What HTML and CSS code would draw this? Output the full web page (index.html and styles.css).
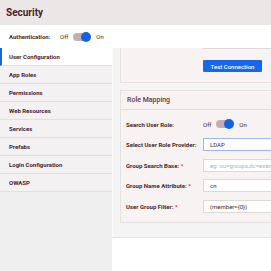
FILE: index.html
```html
<!DOCTYPE html>
<html lang="en">
<head>
  <meta charset="UTF-8">
  <title>Security</title>
  <link rel="stylesheet" href="styles.css">
</head>
<body>
  <div class="topbar">Security</div>

  <div class="authbar">
    <span class="auth-label">Authentication:</span>
    <div class="switch">
      <span>Off</span>
      <span class="track"><span class="knob"></span></span>
      <span>On</span>
    </div>
  </div>

  <div class="layout">
    <ul class="sidebar">
      <li class="active">User Configuration</li>
      <li>App Roles</li>
      <li>Permissions</li>
      <li>Web Resources</li>
      <li>Services</li>
      <li>Prefabs</li>
      <li>Login Configuration</li>
      <li>OWASP</li>
    </ul>

    <div class="main">
      <div class="content">
        <!-- LDAP settings, scrolled up -->
        <div class="card card-ldap">
          <div class="row">
            <span class="label"></span>
            <input class="field" type="password" value="">
          </div>
          <div class="actions">
            <button class="btn">Test Connection</button>
          </div>
        </div>

        <div class="card">
          <div class="card-head">Role Mapping</div>
          <div class="card-body">
            <div class="row">
              <span class="label">Search User Role:</span>
              <div class="switch">
                <span>Off</span>
                <span class="track"><span class="knob"></span></span>
                <span>On</span>
              </div>
            </div>
            <div class="row">
              <span class="label">Select User Role Provider:</span>
              <input class="field focused" type="text" value="LDAP">
            </div>
            <div class="row">
              <span class="label">Group Search Base: <em>*</em></span>
              <input class="field" type="text" placeholder="eg: ou=groups,dc=example,dc=com">
            </div>
            <div class="row">
              <span class="label">Group Name Attribute: <em>*</em></span>
              <input class="field" type="text" value="cn">
            </div>
            <div class="row">
              <span class="label">User Group Filter: <em>*</em></span>
              <input class="field" type="text" value="(member={0})">
            </div>
          </div>
        </div>
      </div>
    </div>
  </div>
</body>
</html>
```

FILE: styles.css
```css
body {
  margin: 0;
  font-family: Roboto, "Liberation Sans", sans-serif;
  color: #4b1f2b;
  background: #fff;
  height: 271px;
  overflow: hidden;
}
.topbar {
  height: 25px;
  line-height: 25px;
  padding-left: 6px;
  background: #ebe7e7;
  font-size: 10px;
  font-weight: 700;
  color: #4a1c28;
}
.authbar {
  height: 23px;
  display: flex;
  align-items: center;
  padding-left: 9px;
  background: #fff;
}
.auth-label {
  font-size: 6px;
  font-weight: 700;
  width: 51px;
}
.switch {
  display: inline-flex;
  align-items: center;
  gap: 5px;
  font-size: 6px;
  color: #4b1f2b;
}
.track {
  position: relative;
  width: 17px;
  height: 8px;
  border-radius: 4px;
  background: #c3aeb0;
  margin-right: 1px;
}
.knob {
  position: absolute;
  right: -1px;
  top: -1px;
  width: 10px;
  height: 10px;
  border-radius: 50%;
  background: #1460e6;
}
.layout {
  display: flex;
  height: 223px;
}
.sidebar {
  list-style: none;
  margin: 0;
  padding: 0;
  width: 112px;
  flex-shrink: 0;
  background: #efefef;
}
.sidebar li {
  height: 17px;
  line-height: 17px;
  padding-left: 9px;
  border-bottom: 1px solid #e2dede;
  background: #f3f1f1;
  font-size: 6px;
  font-weight: 700;
  color: #4d2230;
}
.sidebar li.active {
  background: #fff;
  border-left: 2px solid #1a66e0;
  padding-left: 7px;
}
.main {
  flex: 1;
  min-width: 0;
  background: #fff;
}
.content {
  height: 189px;
  padding-left: 7px;
  border-left: 1px solid #fbfbfb;
  border-bottom: 1px solid #e3e3e3;
  background: #f4f4f4;
  overflow: hidden;
}
.card {
  margin-right: -40px;
  background: #f7f3f3;
  border: 1px solid #e6e0e0;
  padding: 0 5px;
}
.card-ldap {
  margin-top: -16px;
  padding-top: 2px;
  padding-bottom: 10px;
}
.card + .card {
  margin-top: 7px;
}
.card-head {
  height: 18px;
  line-height: 18px;
  border-bottom: 1px solid #e4dcdc;
  margin: 0 -5px;
  padding-left: 6px;
  font-size: 7px;
  font-weight: 500;
  color: #6a3441;
}
.card-body {
  padding: 4px 0 5.5px;
}
.card-body .row {
  height: 20.5px;
}
.row {
  display: flex;
  align-items: center;
}
.label {
  width: 77px;
  flex-shrink: 0;
  font-size: 6px;
  font-weight: 700;
  color: #4b1f2b;
}
.label em {
  font-style: normal;
  color: #e0262b;
}
.field {
  flex: 1;
  height: 13px;
  box-sizing: border-box;
  border: 1px solid #ddd7d7;
  background: #fff;
  padding: 0 6px;
  font-family: Roboto, "Liberation Sans", sans-serif;
  font-size: 6px;
  color: #3c2a2f;
  outline: none;
}
.card-ldap .field {
  height: 14px;
}
.field::placeholder {
  color: #b5b0b0;
}
.field.focused {
  border-color: #9db8e6;
}
.actions {
  display: flex;
  padding-left: 77px;
  margin-top: 11px;
}
.btn {
  width: 59px;
  height: 12px;
  padding: 0;
  border: none;
  border-radius: 1px;
  background: #1668ea;
  color: #fff;
  font-family: Roboto, "Liberation Sans", sans-serif;
  font-size: 6px;
  font-weight: 500;
  cursor: pointer;
}
```
